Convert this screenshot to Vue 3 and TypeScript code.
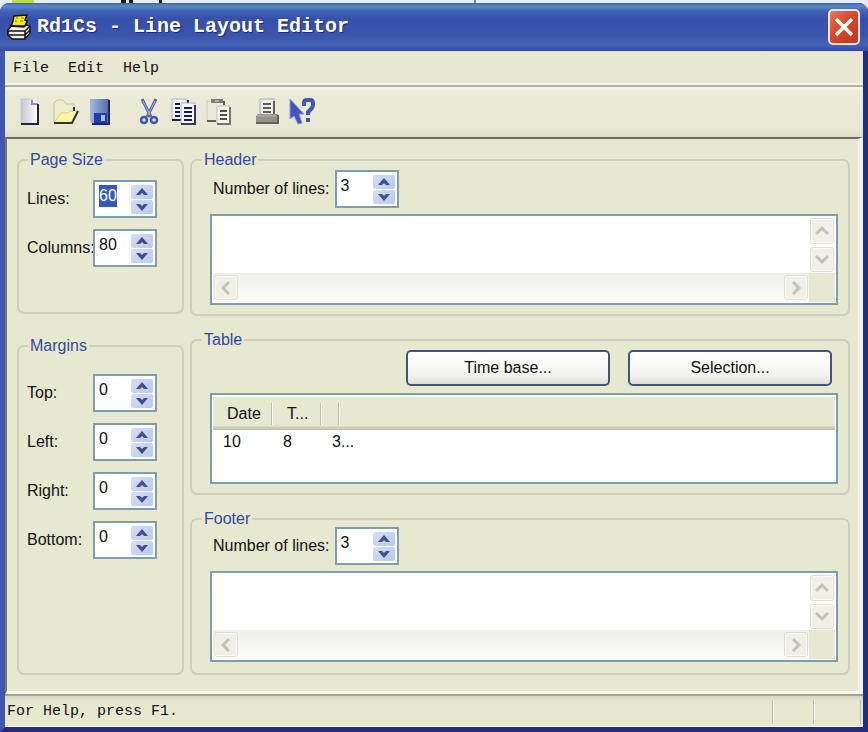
<script setup lang="ts">
import { onMounted, reactive, ref } from 'vue'

interface Field {
  id: string
  label: string
  value: number
}

const pageSize = reactive<Field[]>([
  { id: 'lines', label: 'Lines:', value: 60 },
  { id: 'columns', label: 'Columns:', value: 80 },
])

const margins = reactive<Field[]>([
  { id: 'top', label: 'Top:', value: 0 },
  { id: 'left', label: 'Left:', value: 0 },
  { id: 'right', label: 'Right:', value: 0 },
  { id: 'bottom', label: 'Bottom:', value: 0 },
])

const header = reactive<Field>({ id: 'header-lines', label: 'Number of lines:', value: 3 })
const footer = reactive<Field>({ id: 'footer-lines', label: 'Number of lines:', value: 3 })
const headerText = ref('')
const footerText = ref('')

function step(field: Field, delta: number) {
  field.value = Math.max(0, Number(field.value) + delta)
}

onMounted(() => {
  const first = document.getElementById('lines') as HTMLInputElement | null
  first?.focus()
  first?.select()
})
</script>

<template>
  <div class="desktop">
    <svg class="backdrop" height="12" aria-hidden="true">
      <rect x="12" width="22" height="3" fill="#c3d64e" />
      <path d="M121 0h5v3h-5zM129 0h4v3h-4zM159 0h3v3h-3z" fill="#17171c" />
      <path d="M474 0h2v3h-2z" fill="#77808c" />
    </svg>
    <main class="window">
      <header class="title-bar">
        <svg class="app-icon" viewBox="0 0 24 26" aria-hidden="true">
          <path d="M7 2l13-1-2 5 2 1-2 5H4l2-5z" fill="#f3ea22" stroke="#111" stroke-width="1.5" />
          <path d="M9 4h2M14 4h3M8 7h2M13 7h3" stroke="#a6a018" stroke-width="1.5" />
          <path d="M4 12L1 16v5l4 4h13l5-6v-7l-4-1-2 2z" fill="#f2f2ea" stroke="#111" stroke-width="1.5" />
          <path d="M1 17h17l5-5M2 21h16l5-5M18 17v8" stroke="#111" stroke-width="1.5" fill="none" />
        </svg>
        <h1>Rd1Cs - Line Layout Editor</h1>
        <button class="close" type="button" aria-label="Close">
          <svg viewBox="0 0 20 20" width="20" height="20"><path d="M2 2l16 16M18 2L2 18" stroke="#fff" stroke-width="3.500" /></svg>
        </button>
      </header>

      <nav class="menu">
        <button type="button">File</button>
        <button type="button">Edit</button>
        <button type="button">Help</button>
      </nav>

      <div class="toolbar" role="toolbar">
        <div class="tools">
          <button type="button" aria-label="New">
            <svg viewBox="0 0 26 28">
              <defs><linearGradient id="paper"><stop stop-color="#c6c6d8" /><stop offset="1" stop-color="#fff" /></linearGradient></defs>
              <path d="M3 1h12l5 5v20H3z" fill="url(#paper)" />
              <path d="M3 26V1h12" fill="none" stroke="#c6c6cc" />
              <path d="M14 2v4h6" fill="none" stroke="#9293b4" stroke-width="2" />
              <path d="M20 6v20H3" fill="none" stroke="#23233d" stroke-width="2" />
            </svg>
          </button>
          <button type="button" aria-label="Open">
            <svg viewBox="0 0 26 28">
              <path d="M1 25V5l3-3h6l3 4h8v7" fill="#eeedcb" stroke="#c3c09d" />
              <path d="M1 25l7-10h7l2-2h8l-6 12z" fill="#f8f4a8" stroke="#d6d18e" />
              <path d="M21 9v4M25 13l-6 12H1" fill="none" stroke="#34342a" stroke-width="2" />
            </svg>
          </button>
          <button type="button" aria-label="Save">
            <svg viewBox="0 0 26 28">
              <defs><linearGradient id="disk"><stop stop-color="#a3b9e2" /><stop offset="1" stop-color="#5569ac" /></linearGradient></defs>
              <path d="M2 1h19v25H4l-2-3z" fill="url(#disk)" />
              <path d="M6 15h13v10H6z" fill="#243caa" />
              <path d="M13 17h4v6h-4z" fill="#a9c0ed" />
              <path d="M21 2v24H4" fill="none" stroke="#1c2560" stroke-width="2" />
            </svg>
          </button>
        </div>
        <div class="tools">
          <button type="button" aria-label="Cut">
            <svg viewBox="0 0 26 28">
              <path d="M6 1l9 18M20 1l-9 18" fill="none" stroke="#5468a4" stroke-width="3" />
              <path d="M7 3l7 14M19 3l-7 14" fill="none" stroke="#a8b7d4" />
              <circle cx="8" cy="22" r="3" fill="none" stroke="#3953b6" stroke-width="2.5" />
              <circle cx="18" cy="22" r="3" fill="none" stroke="#3953b6" stroke-width="2.5" />
            </svg>
          </button>
          <button type="button" aria-label="Copy">
            <svg viewBox="0 0 26 28">
              <path d="M1 1h15v21H1z" fill="#f2f2f7" stroke="#abaebb" />
              <path d="M17 2v4M1 22h9" stroke="#23233d" stroke-width="2" />
              <path d="M4 6h5M4 10h5M4 14h5M4 18h5" stroke="#1b1e43" stroke-width="2" />
              <path d="M10 5h14v21H10z" fill="#f3f3fa" stroke="#adb1cb" />
              <path d="M13 10h8M13 14h8M13 18h8M13 22h8" stroke="#1b1e43" stroke-width="2" />
              <path d="M24 7v19H10" fill="none" stroke="#33375f" stroke-width="2" />
            </svg>
          </button>
          <button type="button" aria-label="Paste">
            <svg viewBox="0 0 26 28">
              <path d="M1 3h17v20H1z" fill="#e9e9dc" stroke="#cbcbbb" />
              <path d="M5 1h12v4H5z" fill="#7c7c71" />
              <path d="M9 3h4" stroke="#ddd" />
              <path d="M18 3v4M1 23h9" stroke="#60605a" stroke-width="2" />
              <path d="M11 8h13v18H11z" fill="#f4f4ec" stroke="#bdbdb0" />
              <path d="M14 13h7M14 17h7M14 21h7" stroke="#50504a" stroke-width="2" />
              <path d="M24 9v17H11" fill="none" stroke="#74746a" stroke-width="2" />
            </svg>
          </button>
        </div>
        <div class="tools">
          <button type="button" aria-label="Print">
            <svg viewBox="0 0 26 28">
              <path d="M6 1h14v16H6z" fill="#ededeb" stroke="#aaa" />
              <path d="M9 6h8M9 10h8M9 14h8" stroke="#5c5c5c" stroke-width="2" />
              <path d="M4 16h20v9H2v-7z" fill="#93938c" />
              <path d="M20 3v13M24 17v8H2" fill="none" stroke="#62625d" stroke-width="2" />
              <path d="M3 18h19" stroke="#b9b9b2" />
            </svg>
          </button>
          <button type="button" aria-label="Context help">
            <svg viewBox="0 0 26 28">
              <path d="M1 1v20l4-3 4 8 4-1-3-9h5z" fill="#4355b8" stroke="#8b99d0" />
              <path d="M15 8V5q0-3 3-3h3q3 0 3 3v2q0 2-2 4l-3 3v3" fill="none" stroke="#4355b8" stroke-width="4" />
              <path d="M17 20h4v4h-4z" fill="#4355b8" />
            </svg>
          </button>
        </div>
      </div>

      <form class="client" @submit.prevent>
        <div class="column side">
          <fieldset class="group page-size">
            <legend>Page Size</legend>
            <div v-for="f in pageSize" :key="f.id" class="row">
              <label :for="f.id">{{ f.label }}</label>
              <div class="spinner">
                <input :id="f.id" v-model="f.value" type="text" inputmode="numeric" />
                <div class="arrows">
                  <button type="button" :aria-label="`Increase ${f.label}`" @click="step(f, 1)"><svg viewBox="0 0 12 8"><path d="M0 7l6-7 6 7H8L6 5 4 7z" /></svg></button>
                  <button type="button" :aria-label="`Decrease ${f.label}`" @click="step(f, -1)"><svg viewBox="0 0 12 8"><path d="M0 1l6 7 6-7H8L6 3 4 1z" /></svg></button>
                </div>
              </div>
            </div>
          </fieldset>

          <fieldset class="group margins">
            <legend>Margins</legend>
            <div v-for="f in margins" :key="f.id" class="row">
              <label :for="f.id">{{ f.label }}</label>
              <div class="spinner">
                <input :id="f.id" v-model="f.value" type="text" inputmode="numeric" />
                <div class="arrows">
                  <button type="button" :aria-label="`Increase ${f.label}`" @click="step(f, 1)"><svg viewBox="0 0 12 8"><path d="M0 7l6-7 6 7H8L6 5 4 7z" /></svg></button>
                  <button type="button" :aria-label="`Decrease ${f.label}`" @click="step(f, -1)"><svg viewBox="0 0 12 8"><path d="M0 1l6 7 6-7H8L6 3 4 1z" /></svg></button>
                </div>
              </div>
            </div>
          </fieldset>
        </div>

        <div class="column">
          <fieldset class="group wide">
            <legend>Header</legend>
            <div class="row count">
              <label :for="header.id">{{ header.label }}</label>
              <div class="spinner">
                <input :id="header.id" v-model="header.value" type="text" inputmode="numeric" />
                <div class="arrows">
                  <button type="button" aria-label="More header lines" @click="step(header, 1)"><svg viewBox="0 0 12 8"><path d="M0 7l6-7 6 7H8L6 5 4 7z" /></svg></button>
                  <button type="button" aria-label="Fewer header lines" @click="step(header, -1)"><svg viewBox="0 0 12 8"><path d="M0 1l6 7 6-7H8L6 3 4 1z" /></svg></button>
                </div>
              </div>
            </div>
            <div class="editor">
              <textarea v-model="headerText" aria-label="Header text"></textarea>
              <div class="vbar">
                <button type="button" aria-label="Scroll up"><svg viewBox="0 0 14 14"><path d="M1 10l6-6 6 6" /></svg></button>
                <button type="button" aria-label="Scroll down"><svg viewBox="0 0 14 14"><path d="M1 4l6 6 6-6" /></svg></button>
              </div>
              <div class="hbar">
                <button type="button" aria-label="Scroll left"><svg viewBox="0 0 14 14"><path d="M10 1L4 7l6 6" /></svg></button>
                <button type="button" aria-label="Scroll right"><svg viewBox="0 0 14 14"><path d="M4 1l6 6-6 6" /></svg></button>
              </div>
              <div class="corner"></div>
            </div>
          </fieldset>

          <fieldset class="group wide">
            <legend>Table</legend>
            <div class="actions">
              <button type="button">Time base...</button>
              <button type="button">Selection...</button>
            </div>
            <div class="list">
              <table>
                <colgroup><col class="c-date" /><col class="c-time" /><col class="c-value" /><col /></colgroup>
                <thead>
                  <tr><th>Date</th><th>T...</th><th></th><th></th></tr>
                </thead>
                <tbody>
                  <tr><td>10</td><td>8</td><td>3...</td><td></td></tr>
                </tbody>
              </table>
            </div>
          </fieldset>

          <fieldset class="group wide footer">
            <legend>Footer</legend>
            <div class="row count">
              <label :for="footer.id">{{ footer.label }}</label>
              <div class="spinner">
                <input :id="footer.id" v-model="footer.value" type="text" inputmode="numeric" />
                <div class="arrows">
                  <button type="button" aria-label="More footer lines" @click="step(footer, 1)"><svg viewBox="0 0 12 8"><path d="M0 7l6-7 6 7H8L6 5 4 7z" /></svg></button>
                  <button type="button" aria-label="Fewer footer lines" @click="step(footer, -1)"><svg viewBox="0 0 12 8"><path d="M0 1l6 7 6-7H8L6 3 4 1z" /></svg></button>
                </div>
              </div>
            </div>
            <div class="editor">
              <textarea v-model="footerText" aria-label="Footer text"></textarea>
              <div class="vbar">
                <button type="button" aria-label="Scroll up"><svg viewBox="0 0 14 14"><path d="M1 10l6-6 6 6" /></svg></button>
                <button type="button" aria-label="Scroll down"><svg viewBox="0 0 14 14"><path d="M1 4l6 6 6-6" /></svg></button>
              </div>
              <div class="hbar">
                <button type="button" aria-label="Scroll left"><svg viewBox="0 0 14 14"><path d="M10 1L4 7l6 6" /></svg></button>
                <button type="button" aria-label="Scroll right"><svg viewBox="0 0 14 14"><path d="M4 1l6 6-6 6" /></svg></button>
              </div>
              <div class="corner"></div>
            </div>
          </fieldset>
        </div>
      </form>

      <footer class="status">
        <p>For Help, press F1.</p>
        <span class="pane"></span>
        <span class="pane wide-pane"></span>
      </footer>
    </main>
  </div>
</template>

<style scoped>
* {
  box-sizing: border-box;
}
button {
  margin: 0;
  padding: 0;
  border: 0;
  background: none;
  color: inherit;
  font: inherit;
}
svg {
  display: block;
}
.desktop {
  position: relative;
  display: flex;
  flex-direction: column;
  min-height: 100vh;
  padding-top: 3px;
  background: #e6edf6;
  color: #111;
  font-family: "Liberation Sans", Arial, sans-serif;
  font-size: 16px;
  line-height: 22px;
}
.backdrop {
  position: absolute;
  top: 0;
  left: 0;
  width: 100%;
}
.window {
  position: relative;
  flex: 1;
  display: flex;
  flex-direction: column;
  border: solid #272c7d;
  border-width: 0 5px 5px;
  border-left-color: #3f57b1;
  border-radius: 9px 9px 0 0;
  background: #272c7d;
}
.title-bar {
  display: flex;
  align-items: center;
  gap: 6px;
  height: 48px;
  margin: 0 -5px;
  padding: 0 8px 0 7px;
  border-radius: 9px 9px 0 0;
  background: linear-gradient(#3f62b4 0, #5b86cd 3px, #4263b8 8px, #374fa9 16px, #3b55ae 32px, #4560b6 42px, #334a9f 48px);
}
.app-icon {
  width: 24px;
  height: 26px;
}
h1 {
  flex: 1;
  margin: 0;
  color: #fff;
  font: bold 20px/24px "Liberation Mono", monospace;
  text-shadow: 1px 1px 1px #1b2b70;
}
.close {
  display: grid;
  place-items: center;
  width: 32px;
  height: 36px;
  border: 2px solid #f3e3ea;
  border-radius: 5px;
  background: linear-gradient(135deg, #e07a62, #d8472b 45%, #c5361d);
}
.menu {
  display: flex;
  align-items: center;
  gap: 19px;
  height: 36px;
  padding: 2px 8px 0;
  border-bottom: 2px solid #b2b2a2;
  background: #e7e7d2;
  box-shadow: inset 0 -2px #f4f4e8;
  font: 15px/20px "Liberation Mono", monospace;
}
.toolbar {
  display: flex;
  align-items: center;
  gap: 21px;
  height: 50px;
  padding: 0 13px;
  background: linear-gradient(#f8f8ee 0, #ebebd9 4px, #e7e7d2 42px, #dedec8);
}
.tools {
  display: flex;
  gap: 8px;
}
.tools svg {
  width: 26px;
  height: 28px;
}
.tools button {
  width: 27px;
}
.client {
  flex: 1;
  display: grid;
  grid-template-columns: 167px minmax(0, 1fr);
  gap: 6px;
  padding: 13px 8px 16px 10px;
  border-top: 2px solid #6c6c5e;
  border-left: 2px solid #77776b;
  border-right: 5px solid #eef1ee;
  border-bottom: 3px solid #fbfbf4;
  background: #e7e8d0;
}
.column {
  display: flex;
  flex-direction: column;
  gap: 16px;
}
.side {
  gap: 24px;
}
.group {
  min-width: 0;
  margin: 0;
  padding: 2px 11px 9px 19px;
  border: 2px solid #cfd0bc;
  border-radius: 7px;
}
.side .group {
  display: flex;
  flex-direction: column;
  gap: 11px;
  padding: 12px 8px;
}
.page-size {
  height: 162px;
}
.side .margins {
  flex: 1;
  padding-top: 20px;
}
.wide {
  padding-left: 18px;
  padding-right: 10px;
}
.footer {
  flex: 1;
  padding-top: 0;
}
legend {
  margin-left: 1px;
  padding: 0 2px;
  color: #3449a4;
  line-height: 16px;
}
.wide legend {
  margin-left: -8px;
}
.row {
  display: flex;
  align-items: center;
  justify-content: space-between;
  white-space: nowrap;
}
.side .row {
  padding-right: 17px;
}
.side .row label {
  width: 0;
}
.count {
  justify-content: flex-start;
  gap: 5px;
  margin-bottom: 6px;
  padding-left: 3px;
}
.spinner {
  display: flex;
  width: 64px;
  height: 38px;
  padding: 3px 2px 2px;
  border: 2px solid #7f9db0;
  background: #fff;
}
.spinner input {
  flex: 1;
  min-width: 0;
  height: 22px;
  padding: 0 0 0 2px;
  border: 0;
  outline: 0;
  background: none;
  color: #111;
  font: inherit;
}
.spinner input::selection {
  background: #3459bd;
  color: #fff;
}
.arrows {
  display: grid;
  gap: 1px;
  width: 22px;
}
.arrows button {
  display: grid;
  place-items: center;
  border-radius: 2px;
  background: linear-gradient(135deg, #d4def7, #b9c8ee);
}
.arrows svg {
  width: 12px;
  height: 8px;
  fill: #404f86;
}
.editor {
  display: grid;
  grid-template: 56px 29px / minmax(0, 1fr) 26px;
  padding: 1px;
  border: 2px solid #7f9db0;
  background: #fff;
}
.editor textarea {
  width: 100%;
  height: 100%;
  padding: 3px;
  border: 0;
  outline: 0;
  overflow: hidden;
  resize: none;
  background: #fff;
  font: inherit;
}
.vbar {
  display: grid;
  gap: 3px;
  padding: 1px;
}
.hbar {
  display: flex;
  justify-content: space-between;
  padding: 2px 1px;
  background: linear-gradient(#efefea, #fdfdfb);
}
.corner {
  background: #e7e8d0;
}
.vbar button,
.hbar button {
  display: grid;
  place-items: center;
  width: 24px;
  border: 1px solid #dedfd1;
  border-radius: 3px;
  background: #f0f0e6;
  box-shadow: inset 0 0 0 1px #fafaf4;
}
.vbar svg,
.hbar svg {
  width: 14px;
  height: 14px;
  fill: none;
  stroke: #c3c3b9;
  stroke-width: 3;
}
.actions {
  display: flex;
  justify-content: flex-end;
  gap: 18px;
  margin-bottom: 7px;
  padding-right: 6px;
}
.actions button {
  width: 204px;
  height: 36px;
  border: 2px solid #43557f;
  border-radius: 5px;
  background: linear-gradient(#fff, #f4f4ef 70%, #dfdfd5);
}
.list {
  height: 91px;
  padding: 2px 1px;
  border: 2px solid #7f9db0;
  background: #fff;
}
table {
  width: 100%;
  border-collapse: collapse;
  table-layout: fixed;
}
.c-date {
  width: 60px;
}
.c-time {
  width: 49px;
}
.c-value {
  width: 18px;
}
thead {
  background: linear-gradient(#e7e8d0 0, #e7e8d0 28px, #c5c3ad 32px);
}
th {
  height: 33px;
  padding: 0 0 0 14px;
  background: linear-gradient(#bdbda9, #bdbda9) right 1px center / 1px 22px no-repeat, linear-gradient(#fff, #fff) right center / 1px 22px no-repeat;
  font-weight: normal;
  text-align: left;
}
th:last-child {
  background: none;
}
td {
  padding: 1px 0 0 10px;
  white-space: nowrap;
}
.status {
  display: flex;
  align-items: center;
  height: 33px;
  padding: 2px 2px 0;
  border-top: 2px solid #a3a393;
  border-bottom: 1px solid #f8f8ee;
  background: linear-gradient(#d8d8c4 0, #e7e8d0 6px, #e7e8d0);
  font: 15px/20px "Liberation Mono", monospace;
}
.status p {
  flex: 1;
  margin: 0;
}
.pane {
  width: 41px;
  height: 24px;
  border-left: 1px solid #bdbda9;
  box-shadow: inset 1px 0 #fff;
}
.wide-pane {
  width: 48px;
  border-right: 1px solid #bdbda9;
}
</style>

<style>
body {
  margin: 0;
}
</style>
